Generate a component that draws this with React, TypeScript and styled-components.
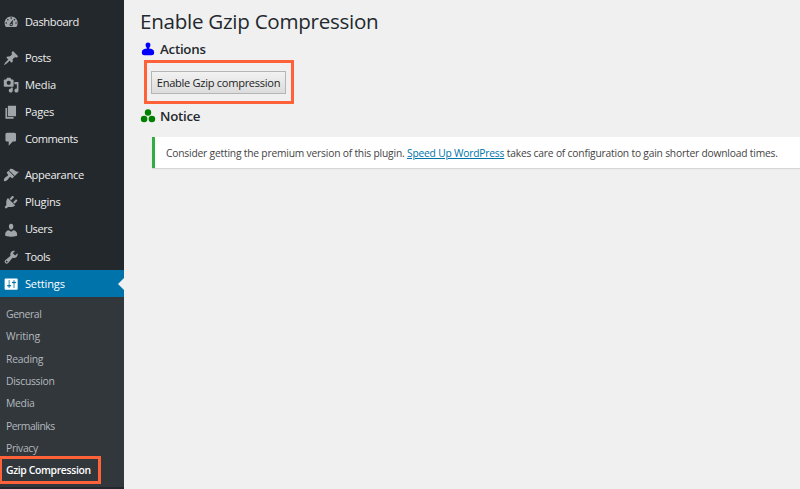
import React from 'react';
import styled, { createGlobalStyle, css } from 'styled-components';

const GlobalStyle = createGlobalStyle`
  * { box-sizing: border-box; }
  body {
    margin: 0;
    background: #f0f0f0;
    font-family: 'Open Sans', 'Noto Sans', sans-serif;
    overflow: hidden;
  }
`;

const Page = styled.div`
  display: flex;
  width: 800px;
  height: 489px;
  overflow: hidden;
  background: #f0f0f0;
`;

const Sidebar = styled.nav`
  flex: none;
  width: 124px;
  height: 489px;
  padding-top: 8.5px;
  background: #23282d;
  overflow: hidden;
`;

const MenuGroup = styled.ul`
  list-style: none;
  margin: 0 0 9px;
  padding: 0;
`;

const MenuItem = styled.li<{ $active?: boolean }>`
  display: flex;
  align-items: center;
  justify-content: space-between;
  height: 27.1px;
  padding-left: 2.6px;
  color: ${(p) => (p.$active ? '#fff' : '#eee')};
  background: ${(p) => (p.$active ? '#0073aa' : 'transparent')};
`;

const MenuIcon = styled.svg<{ $active?: boolean }>`
  flex: none;
  width: 16.3px;
  height: 16.3px;
  fill: ${(p) => (p.$active ? '#fff' : '#a0a5aa')};
`;

const MenuLabel = styled.span<{ $spacing: number }>`
  flex: 1;
  margin-left: 6px;
  padding-bottom: 0.5px;
  font-size: 11.1px;
  line-height: 26px;
  letter-spacing: ${(p) => p.$spacing}px;
  white-space: nowrap;
`;

const ActiveArrow = styled.span`
  width: 0;
  height: 0;
  border: 6.5px solid transparent;
  border-left-width: 0;
  border-right-color: #f0f0f0;
`;

const SubMenu = styled.ul`
  list-style: none;
  height: 190px;
  margin: -9px 0 0;
  padding: 5.5px 0 0;
  background: #32373c;
`;

const SubItem = styled.li<{ $spacing: number; $current?: boolean }>`
  display: flex;
  align-items: center;
  height: 22.35px;
  padding-left: 6px;
  font-size: 10.4px;
  letter-spacing: ${(p) => p.$spacing}px;
  color: #b4b9be;
  white-space: nowrap;
  ${(p) =>
    p.$current &&
    css`
      width: 101px;
      height: 28px;
      margin-top: -3px;
      padding-left: 4px;
      border: 3px solid #ff6238;
      border-left-width: 2px;
      color: #fff;
      font-weight: 600;
    `}
`;

const Content = styled.main`
  flex: 1;
  min-width: 0;
  padding-left: 16px;
`;

const Title = styled.h1`
  margin: 6px 0 0;
  font-size: 20.6px;
  font-weight: 400;
  line-height: 30px;
  letter-spacing: -0.28px;
  color: #23282d;
  white-space: nowrap;
`;

const Section = styled.h2<{ $top: number }>`
  display: flex;
  align-items: center;
  height: 22px;
  margin: ${(p) => p.$top}px 0 0;
  font-size: 13.3px;
  font-weight: 600;
  letter-spacing: -0.25px;
  color: #23282d;
`;

const SectionIcon = styled.svg`
  width: 16px;
  height: 16px;
  margin-right: 4px;
`;

const Highlight = styled.div`
  display: flex;
  align-items: center;
  width: 150px;
  height: 44px;
  margin: 0 0 0 4px;
  padding: 1px 0 0 4px;
  border: 3px solid #ff6238;
`;

const EnableButton = styled.button`
  width: 135px;
  height: 23px;
  padding: 0;
  border: 1px solid #b5b5b5;
  border-radius: 0;
  background: linear-gradient(#f2f2f2, #dcdcdc);
  font-family: inherit;
  font-size: 11.1px;
  line-height: 21px;
  letter-spacing: -0.3px;
  color: #222;
  white-space: nowrap;
`;

const Notice = styled.div`
  height: 31px;
  margin: 10.4px 0 0 12px;
  padding-left: 11px;
  border-left: 3px solid #2fae42;
  background: #fff;
  box-shadow: 0 1px 1px rgba(0, 0, 0, 0.1);
  font-size: 10.25px;
  line-height: 33px;
  letter-spacing: -0.19px;
  color: #444;
  white-space: nowrap;
`;

const NoticeLink = styled.a`
  color: #0073aa;
  text-decoration: underline;
`;

interface Entry {
  label: string;
  spacing: number;
  path: string;
  active?: boolean;
}

const groups: Entry[][] = [
  [
    {
      label: 'Dashboard',
      spacing: -0.35,
      path: 'M3.76 16h12.48c1.1-1.37 1.76-3.11 1.76-5 0-4.42-3.58-8-8-8s-8 3.58-8 8c0 1.89.66 3.63 1.76 5zM10 4c.55 0 1 .45 1 1s-.45 1-1 1-1-.45-1-1 .45-1 1-1zM6 6c.55 0 1 .45 1 1s-.45 1-1 1-1-.45-1-1 .45-1 1-1zm8 0c.55 0 1 .45 1 1s-.45 1-1 1-1-.45-1-1 .45-1 1-1zm-5.37 5.55L12 7v6c0 1.1-.9 2-2 2s-2-.9-2-2c0-.57.24-1.08.63-1.45zM4 10c.55 0 1 .45 1 1s-.45 1-1 1-1-.45-1-1 .45-1 1-1zm12 0c.55 0 1 .45 1 1s-.45 1-1 1-1-.45-1-1 .45-1 1-1zm-5 3c0-.55-.45-1-1-1s-1 .45-1 1 .45 1 1 1 1-.45 1-1z',
    },
  ],
  [
    {
      label: 'Posts',
      spacing: -0.35,
      path: 'M10.44 3.02l1.82-1.82 6.36 6.35-1.83 1.82c-1.05-.68-2.48-.57-3.41.36l-.75.75c-.92.93-1.04 2.35-.35 3.41l-1.83 1.82-2.41-2.41-2.8 2.79c-.42.42-3.38 2.71-3.8 2.29s1.86-3.39 2.28-3.81l2.79-2.79L4.1 9.36l1.83-1.82c1.05.69 2.48.57 3.4-.36l.75-.75c.93-.92 1.05-2.35.36-3.41z',
    },
    {
      label: 'Media',
      spacing: -0.15,
      path: 'M13 11V4c0-.55-.45-1-1-1h-1.67L9 1H5L3.67 3H2c-.55 0-1 .45-1 1v7c0 .55.45 1 1 1h10c.55 0 1-.45 1-1zM7 4.5c1.38 0 2.5 1.12 2.5 2.5S8.38 9.5 7 9.5 4.5 8.38 4.5 7 5.62 4.5 7 4.5zM14 6h5v10.5c0 1.38-1.12 2.5-2.5 2.5S14 17.88 14 16.5s1.12-2.5 2.5-2.5c.17 0 .34.02.5.05V9h-3V6zm-4 8.05V13h2v3.5c0 1.38-1.12 2.5-2.5 2.5S7 17.88 7 16.5 8.12 14 9.5 14c.17 0 .34.02.5.05z',
    },
    {
      label: 'Pages',
      spacing: -0.25,
      path: 'M6 15V2h10v13H6zm-1 1h8v2H3V5h2v11z',
    },
    {
      label: 'Comments',
      spacing: -0.45,
      path: 'M5 2h9c1.1 0 2 .9 2 2v7c0 1.1-.9 2-2 2h-2l-5 5v-5H5c-1.1 0-2-.9-2-2V4c0-1.1.9-2 2-2z',
    },
  ],
  [
    {
      label: 'Appearance',
      spacing: -0.3,
      path: 'M14.48 11.06L7.41 3.99l1.5-1.5c.5-.56 2.3-.47 3.51.32 1.21.8 1.43 1.28 2.91 2.1 1.18.64 2.45 1.26 4.45.85zm-.71.71L6.7 4.7 4.93 6.47c-.39.39-.39 1.02 0 1.41l1.06 1.06c.39.39.39 1.03 0 1.42-.6.6-1.43 1.11-2.21 1.69-.35.26-.7.53-1.01.84C1.43 14.23.4 16.08 1.4 17.07c.99 1 2.84-.03 4.18-1.36.31-.31.58-.66.85-1.02.57-.78 1.08-1.61 1.69-2.21.39-.39 1.02-.39 1.41 0l1.06 1.06c.39.39 1.02.39 1.41 0z',
    },
    {
      label: 'Plugins',
      spacing: -0.2,
      path: 'M13.11 4.36L9.87 7.6 8 5.73l3.24-3.24c.35-.34 1.05-.2 1.56.32.52.51.66 1.21.31 1.55zm-8 1.77l.91-1.12 9.01 9.01-1.19.84c-.71.71-2.63 1.16-3.82 1.16H6.14L4.9 17.26c-.59.59-1.54.59-2.12 0-.59-.58-.59-1.53 0-2.12l1.24-1.24v-3.88c0-1.13.4-3.19 1.09-3.89zm7.26 3.97l3.24-3.24c.34-.35 1.04-.21 1.55.31.52.51.66 1.21.31 1.55l-3.24 3.25z',
    },
    {
      label: 'Users',
      spacing: -0.4,
      path: 'M10 9.25c-2.27 0-2.73-3.44-2.73-3.44C7 4.02 7.82 2 9.97 2c2.16 0 2.98 2.02 2.71 3.81 0 0-.41 3.44-2.68 3.44zm0 2.57L12.72 10c2.39 0 4.52 2.33 4.52 4.53v2.49s-3.65 1.13-7.24 1.13c-3.65 0-7.24-1.13-7.24-1.13v-2.49c0-2.25 1.94-4.48 4.47-4.48z',
    },
    {
      label: 'Tools',
      spacing: -0.45,
      path: 'M16.68 9.77c-1.34 1.34-3.3 1.67-4.95.99l-5.41 6.52c-.99.99-2.59.99-3.58 0s-.99-2.59 0-3.57l6.52-5.42c-.68-1.65-.35-3.61.99-4.95 1.28-1.28 3.12-1.62 4.72-1.06l-2.89 2.89 2.82 2.82 2.86-2.87c.53 1.58.18 3.39-1.08 4.65zM3.81 16.21c.4.39 1.04.39 1.43 0 .4-.4.4-1.04 0-1.43-.39-.4-1.03-.4-1.43 0-.39.39-.39 1.03 0 1.43z',
    },
    {
      label: 'Settings',
      spacing: -0.15,
      active: true,
      path: 'M18 16V4c0-.55-.45-1-1-1H3c-.55 0-1 .45-1 1v12c0 .55.45 1 1 1h14c.55 0 1-.45 1-1zM8 11h1c.55 0 1 .45 1 1s-.45 1-1 1H8v1.5c0 .28-.22.5-.5.5s-.5-.22-.5-.5V13H6c-.55 0-1-.45-1-1s.45-1 1-1h1V5.5c0-.28.22-.5.5-.5s.5.22.5.5V11zm5-2h-1c-.55 0-1-.45-1-1s.45-1 1-1h1V5.5c0-.28.22-.5.5-.5s.5.22.5.5V7h1c.55 0 1 .45 1 1s-.45 1-1 1h-1v5.5c0 .28-.22.5-.5.5s-.5-.22-.5-.5V9z',
    },
  ],
];

const subItems: { label: string; spacing: number; current?: boolean }[] = [
  { label: 'General', spacing: -0.4 },
  { label: 'Writing', spacing: -0.1 },
  { label: 'Reading', spacing: -0.25 },
  { label: 'Discussion', spacing: -0.3 },
  { label: 'Media', spacing: -0.3 },
  { label: 'Permalinks', spacing: -0.5 },
  { label: 'Privacy', spacing: -0.35 },
  { label: 'Gzip Compression', spacing: -0.35, current: true },
];

export default function App() {
  return (
    <Page>
      <GlobalStyle />
      <Sidebar>
        {groups.map((group) => (
          <MenuGroup key={group[0].label}>
            {group.map((item) => (
              <MenuItem key={item.label} $active={item.active}>
                <MenuIcon viewBox="0 0 20 20" $active={item.active}>
                  <path d={item.path} />
                </MenuIcon>
                <MenuLabel $spacing={item.spacing}>{item.label}</MenuLabel>
                {item.active && <ActiveArrow />}
              </MenuItem>
            ))}
          </MenuGroup>
        ))}
        <SubMenu>
          {subItems.map((item) => (
            <SubItem key={item.label} $spacing={item.spacing} $current={item.current}>
              {item.label}
            </SubItem>
          ))}
        </SubMenu>
      </Sidebar>
      <Content>
        <Title>Enable Gzip Compression</Title>
        <Section $top={2}>
          <SectionIcon viewBox="0 0 16 16" fill="#00f">
            <path d="M8 1.6c1.700 0 2.500 1.200 2.400 2.600-.1 1.500-1 2.500-1.400 2.900v.5c2.800.1 5.200 1.300 5.200 3.700 0 2.400-1.200 3-2.600 3H4.400c-1.400 0-2.600-.6-2.600-3 0-2.400 2.400-3.600 5.200-3.700v-.5c-.4-.4-1.300-1.400-1.400-2.900C5.500 2.800 6.300 1.600 8 1.600z" />
          </SectionIcon>
          Actions
        </Section>
        <Highlight>
          <EnableButton type="button">Enable Gzip compression</EnableButton>
        </Highlight>
        <Section $top={1}>
          <SectionIcon viewBox="0 0 16 16" fill="#008000">
            <circle cx="8" cy="4.500" r="3.200" />
            <circle cx="4.100" cy="11" r="3.300" />
            <circle cx="11.900" cy="11" r="3.300" />
          </SectionIcon>
          Notice
        </Section>
        <Notice>
          Consider getting the premium version of this plugin. <NoticeLink>Speed Up WordPress</NoticeLink> takes
          care of configuration to gain shorter download times.
        </Notice>
      </Content>
    </Page>
  );
}
